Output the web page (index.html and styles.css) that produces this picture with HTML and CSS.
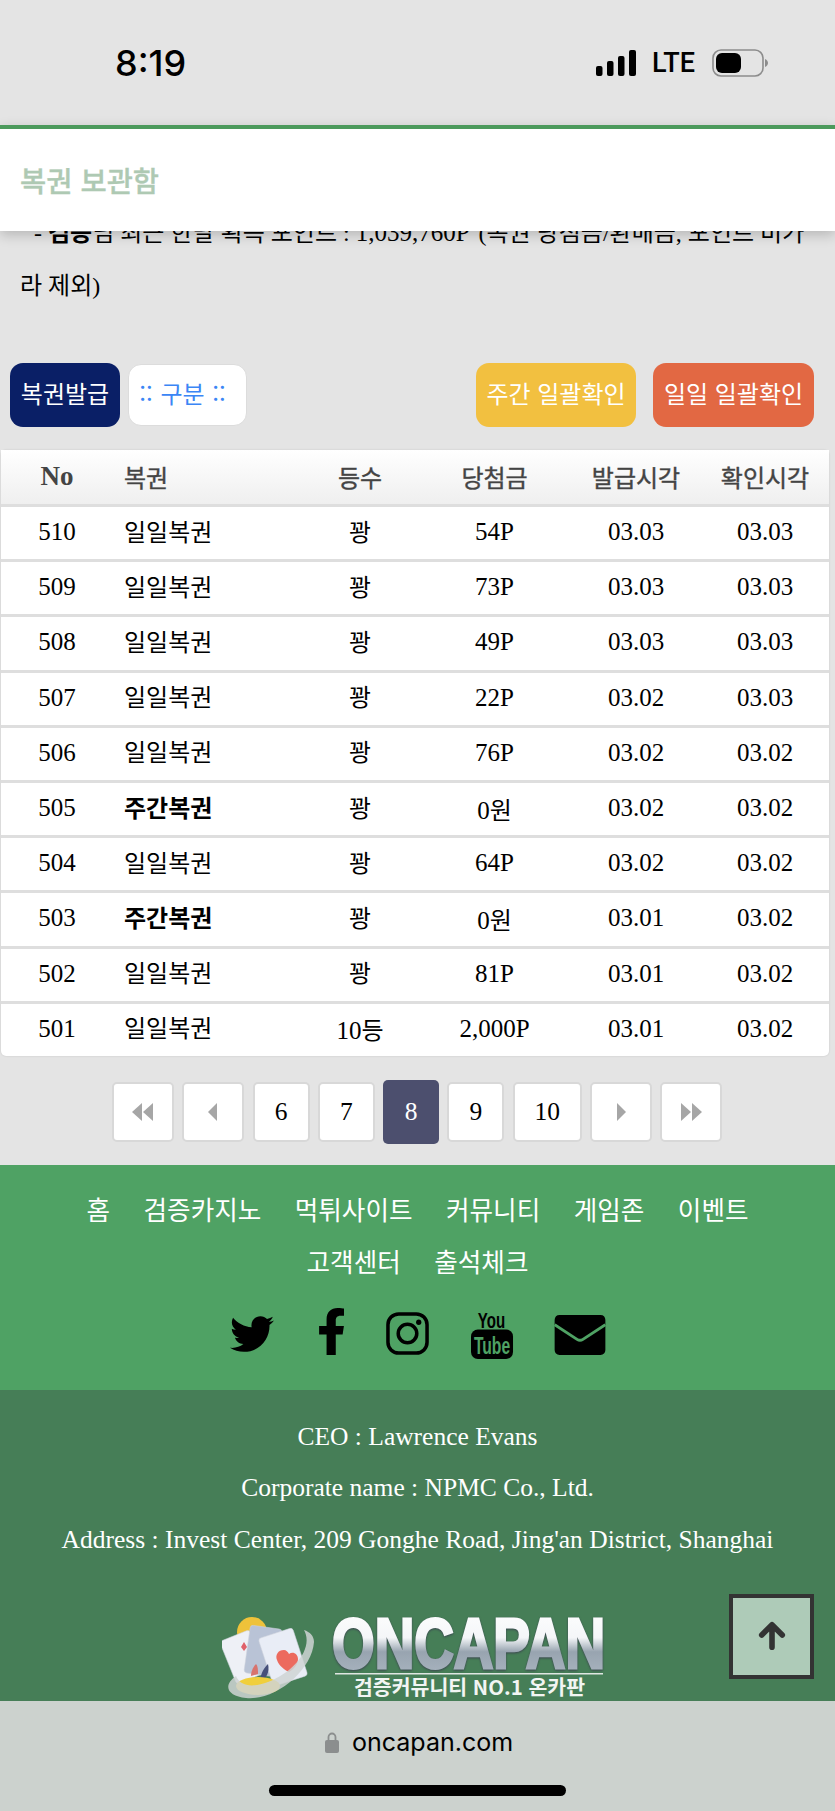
FILE: index.html
```html
<!DOCTYPE html>
<html lang="ko">
<head>
    <meta charset="UTF-8">
    <meta name="viewport" content="width=device-width, initial-scale=1.0">
    <title>복권 보관함</title>
    <link rel="stylesheet" href="styles.css">
</head>
<body>
    <div class="screen">
        <div class="status-bar">
            <span class="clock">8:19</span>
            <div class="status-right">
                <svg class="signal" viewBox="0 0 41 26" width="41" height="26">
                    <rect x="0" y="16" width="6.500" height="10" rx="2"/>
                    <rect x="11" y="11" width="6.500" height="15" rx="2"/>
                    <rect x="22" y="6" width="6.500" height="20" rx="2"/>
                    <rect x="33" y="0" width="7" height="26" rx="2"/>
                </svg>
                <span class="lte">LTE</span>
                <svg class="battery" viewBox="0 0 56 28" width="56" height="28">
                    <rect x="1" y="1" width="50" height="26" rx="8" fill="none" stroke="#8c8c8c" stroke-width="1.6"/>
                    <rect x="4" y="4" width="25" height="20" rx="6" fill="#000"/>
                    <path d="M53 10c2 1 3 2.500 3 4s-1 3-3 4z" fill="#8c8c8c"/>
                </svg>
            </div>
        </div>

        <div class="page-title">복권 보관함</div>

        <p class="notice"><span class="notice-first">- <b>검증</b>님 최근 한달 획득 포인트 : <span class="latin">1,039,760P</span> (복권 당첨금/환매금, 포인트 비가</span><br>라 제외)</p>

        <div class="toolbar">
            <a class="btn btn-navy">복권발급</a>
            <a class="btn btn-filter">:: 구분 ::</a>
            <a class="btn btn-yellow">주간 일괄확인</a>
            <a class="btn btn-orange">일일 일괄확인</a>
        </div>

        <table class="ticket-table">
            <colgroup>
                <col class="col-no"><col class="col-name"><col class="col-rank"><col class="col-prize"><col class="col-time"><col class="col-time2">
            </colgroup>
            <thead>
                <tr><th class="num">No</th><th class="left">복권</th><th>등수</th><th>당첨금</th><th>발급시각</th><th>확인시각</th></tr>
            </thead>
            <tbody>
                <tr><td>510</td><td class="left">일일복권</td><td class="ko">꽝</td><td>54P</td><td>03.03</td><td>03.03</td></tr>
                <tr><td>509</td><td class="left">일일복권</td><td class="ko">꽝</td><td>73P</td><td>03.03</td><td>03.03</td></tr>
                <tr><td>508</td><td class="left">일일복권</td><td class="ko">꽝</td><td>49P</td><td>03.03</td><td>03.03</td></tr>
                <tr><td>507</td><td class="left">일일복권</td><td class="ko">꽝</td><td>22P</td><td>03.02</td><td>03.03</td></tr>
                <tr><td>506</td><td class="left">일일복권</td><td class="ko">꽝</td><td>76P</td><td>03.02</td><td>03.02</td></tr>
                <tr><td>505</td><td class="left"><b>주간복권</b></td><td class="ko">꽝</td><td>0<span class="ko">원</span></td><td>03.02</td><td>03.02</td></tr>
                <tr><td>504</td><td class="left">일일복권</td><td class="ko">꽝</td><td>64P</td><td>03.02</td><td>03.02</td></tr>
                <tr><td>503</td><td class="left"><b>주간복권</b></td><td class="ko">꽝</td><td>0<span class="ko">원</span></td><td>03.01</td><td>03.02</td></tr>
                <tr><td>502</td><td class="left">일일복권</td><td class="ko">꽝</td><td>81P</td><td>03.01</td><td>03.02</td></tr>
                <tr class="row-last"><td>501</td><td class="left">일일복권</td><td>10<span class="ko">등</span></td><td>2,000P</td><td>03.01</td><td>03.02</td></tr>
            </tbody>
        </table>

        <div class="pager">
            <a class="page page-arrow"><svg viewBox="0 0 24 18" width="24" height="18"><polygon points="11,0 11,18 1,9"/><polygon points="22,0 22,18 12,9"/></svg></a>
            <a class="page page-arrow"><svg viewBox="0 0 12 18" width="12" height="18"><polygon points="10,0 10,18 1,9"/></svg></a>
            <a class="page page-six">6</a>
            <a class="page page-six">7</a>
            <a class="page page-on">8</a>
            <a class="page page-six">9</a>
            <a class="page page-ten">10</a>
            <a class="page page-arrow"><svg viewBox="0 0 12 18" width="12" height="18"><polygon points="2,0 2,18 11,9"/></svg></a>
            <a class="page page-arrow"><svg viewBox="0 0 24 18" width="24" height="18"><polygon points="2,0 2,18 12,9"/><polygon points="13,0 13,18 23,9"/></svg></a>
        </div>

        <div class="footer-nav">
            <div class="nav-links">
                <a>홈</a><a>검증카지노</a><a>먹튀사이트</a><a>커뮤니티</a><a>게임존</a><a>이벤트</a><a>고객센터</a><a>출석체크</a>
            </div>
            <div class="socials">
                <svg class="ico-twitter" viewBox="0 0 512 512" width="44" height="44"><path d="M459.37 151.716c.325 4.548.325 9.097.325 13.645 0 138.72-105.583 298.558-298.558 298.558-59.452 0-114.68-17.219-161.137-47.106 8.447.974 16.568 1.299 25.34 1.299 49.055 0 94.213-16.568 130.274-44.832-46.132-.975-84.792-31.188-98.112-72.772 6.498.974 12.995 1.624 19.818 1.624 9.421 0 18.843-1.3 27.614-3.573-48.081-9.747-84.143-51.98-84.143-102.985v-1.299c13.969 7.797 30.214 12.67 47.431 13.319-28.264-18.843-46.781-51.005-46.781-87.391 0-19.492 5.197-37.36 14.294-52.954 51.655 63.675 129.3 105.258 216.365 109.807-1.624-7.797-2.599-15.918-2.599-24.04 0-57.828 46.782-104.934 104.934-104.934 30.213 0 57.502 12.67 76.67 33.137 23.715-4.548 46.456-13.32 66.599-25.34-7.798 24.366-24.366 44.833-46.132 57.827 21.117-2.273 41.584-8.122 60.426-16.243-14.292 20.791-32.161 39.308-52.628 54.253z"/></svg>
                <svg class="ico-fb" viewBox="22 0 272 512" width="25" height="47"><path d="M279.14 288l14.22-92.66h-88.91v-60.13c0-25.35 12.42-50.06 52.24-50.06h40.42V6.26S260.43 0 225.36 0c-73.22 0-121.08 44.38-121.08 124.72v70.62H22.89V288h81.39v224h100.17V288z"/></svg>
                <svg class="ico-insta" viewBox="0 0 44 44" width="43" height="43">
                    <rect x="2" y="2" width="40" height="40" rx="11" fill="none" stroke="#000" stroke-width="3.600"/>
                    <circle cx="22" cy="22" r="9.500" fill="none" stroke="#000" stroke-width="3.600"/>
                    <circle cx="33.500" cy="10.500" r="2.700"/>
                </svg>
                <svg class="ico-yt" viewBox="0 0 44 52" width="43" height="51">
                    <text x="7" y="20" class="yt-you" textLength="28" lengthAdjust="spacingAndGlyphs">You</text>
                    <rect x="0" y="22" width="43" height="30" rx="7"/>
                    <text x="3" y="47" class="yt-tube" textLength="37" lengthAdjust="spacingAndGlyphs">Tube</text>
                </svg>
                <svg class="ico-mail" viewBox="0 0 52 41" width="52" height="40">
                    <path d="M5 0h42c3 0 5 2 5 5v31c0 3-2 5-5 5H5c-3 0-5-2-5-5V5c0-3 2-5 5-5z"/>
                    <path d="M0 10l23 15c2 1.300 4 1.300 6 0l23-15" fill="none" stroke="#4fa264" stroke-width="3"/>
                </svg>
            </div>
        </div>

        <div class="footer-info">
            <p>CEO : Lawrence Evans</p>
            <p>Corporate name : NPMC Co., Ltd.</p>
            <p>Address : Invest Center, 209 Gonghe Road, Jing'an District, Shanghai</p>
            <svg class="logo" viewBox="0 0 386 86" width="386" height="86">
                <defs>
                    <linearGradient id="chrome" x1="0" y1="0" x2="0" y2="1">
                        <stop offset="0" stop-color="#ffffff"/>
                        <stop offset="0.42" stop-color="#f4f6f8"/>
                        <stop offset="0.6" stop-color="#98a4b0"/>
                        <stop offset="1" stop-color="#aeb9c4"/>
                    </linearGradient>
                </defs>
                <circle cx="30" cy="18" r="15" fill="#eec23a"/>
                <g stroke="#cfd4dc" stroke-width="0.500">
                    <rect x="5" y="20" width="32" height="46" rx="3" fill="#eef0f6" transform="rotate(-22 21 43)"/>
                    <rect x="25" y="13" width="32" height="48" rx="3" fill="#b9c3d6" transform="rotate(8 41 37)"/>
                    <rect x="43" y="18" width="36" height="50" rx="3" fill="#e9edf6" transform="rotate(-18 61 43)"/>
                </g>
                <path d="M22 28l3 5-3 4-3-4z" fill="#e0606a"/>
                <path d="M34 50c-4 4-5 9-5 12l7-2c0-4 0-8-2-10z" fill="#d8736e"/>
                <path d="M46 50c-6 6-8 12-7 17 5-2 9-9 7-17z" fill="#46507a"/>
                <path d="M62 36c-6 0-9 5-7 10 2 6 8 10 12 12 5-3 9-8 9-13 0-5-5-8-9-5-1-2-3-4-5-4z" fill="#ec6a5e"/>
                <ellipse cx="36" cy="72" rx="22" ry="9" fill="#f0cf3c"/>
                <path d="M14 62C0 72 6 82 24 84c30 3 66-28 68-56 0-6-4-10-10-12 10 18-10 42-36 52-16 6-28 4-32-6z" fill="#cfd3d3" opacity="0.850"/>
                <text x="110" y="54" class="logo-name" fill="url(#chrome)" stroke="url(#chrome)" textLength="273" lengthAdjust="spacingAndGlyphs">ONCAPAN</text>
                <rect x="113" y="59" width="268" height="1.500" fill="#dfe6e2"/>
                <text x="132" y="81" class="logo-sub" textLength="231" lengthAdjust="spacingAndGlyphs">검증커뮤니티 NO.1 온카판</text>
            </svg>
            <a class="to-top">
                <svg viewBox="0 0 30 32" width="28" height="30"><path d="M15 28V5M4 15L15 4l11 11" fill="none" stroke="#333" stroke-width="6" stroke-linecap="round" stroke-linejoin="round"/></svg>
            </a>
        </div>

        <div class="browser-bar">
            <div class="address">
                <svg viewBox="0 0 14 22" width="14" height="22"><path d="M3.500 10V6a3.500 3.500 0 0 1 7 0v4" fill="none" stroke="#8b8e8e" stroke-width="1.800"/><rect x="0" y="9" width="14" height="13" rx="2" fill="#8b8e8e"/></svg>
                <span>oncapan.com</span>
            </div>
            <div class="home-bar"></div>
        </div>
    </div>
</body>
</html>
```

FILE: styles.css
```css
html, body {
    margin: 0;
    padding: 0;
}
body {
    font-family: "Liberation Serif", "Noto Sans CJK KR", serif;
    background-color: #e4e4e4;
    color: #000;
}
.screen {
    width: 835px;
    height: 1811px;
    overflow: hidden;
    display: flex;
    flex-direction: column;
}

/* phone status bar */
.status-bar {
    height: 125px;
    flex: none;
    box-sizing: border-box;
    padding: 0 67px 0 115px;
    display: flex;
    justify-content: space-between;
    align-items: center;
    font-family: "Inter", "Liberation Sans", sans-serif;
}
.clock {
    font-size: 36px;
    font-weight: 500;
}
.status-right {
    display: flex;
    align-items: center;
    gap: 15px;
}
.lte {
    margin-right: 2px;
    font-size: 27px;
    font-weight: 500;
    font-family: "Roboto", sans-serif;
}

/* title */
.page-title {
    position: relative;
    z-index: 2;
    flex: none;
    height: 102px;
    line-height: 102px;
    padding-left: 20px;
    background: #fff;
    border-top: 4px solid #4c9a5c;
    box-shadow: 0 4px 12px rgba(0, 0, 0, 0.2);
    color: #aec9b3;
    font-family: "Noto Sans CJK KR", sans-serif;
    font-size: 28.500px;
    font-weight: 500;
    -webkit-text-stroke: 0.3px #aec9b3;
}
.notice {
    flex: none;
    margin: -25px 0 0;
    padding-left: 20px;
    font-size: 24px;
    line-height: 53px;
    white-space: nowrap;
}
.notice-first {
    padding-left: 14px;
}
.latin {
    font-size: 25px;
    margin-right: 3px;
}

/* buttons */
.toolbar {
    flex: none;
    margin-top: 50px;
    padding: 0 21px 0 10px;
    height: 64px;
    display: flex;
    align-items: center;
    font-family: "Noto Sans CJK KR", sans-serif;
}
.btn {
    height: 64px;
    line-height: 60px;
    box-sizing: border-box;
    text-align: center;
    font-size: 24px;
    color: #fff;
    border-radius: 13px;
}
.btn-navy {
    width: 110px;
    background: #0a1f66;
}
.btn-filter {
    width: 119px;
    height: 62px;
    line-height: 56px;
    margin-left: 8px;
    padding-right: 10px;
    background: #fff;
    color: #3b86f5;
    border: 1px solid #dcdcdc;
    margin-right: auto;
    word-spacing: 1px;
}
.btn-yellow {
    width: 160px;
    background: #f2c040;
}
.btn-orange {
    width: 161px;
    margin-left: 17px;
    background: #e26843;
}

/* table */
.ticket-table {
    flex: none;
    width: 828px;
    margin: 23px 0 0 1px;
    table-layout: fixed;
    border-collapse: separate;
    border-spacing: 0;
    background: #fff;
    border-radius: 5px;
    font-size: 25px;
    box-shadow: 0 0 2px rgba(0, 0, 0, 0.15);
}
.col-no { width: 112px; }
.col-name { width: 189px; }
.col-rank { width: 116px; }
.col-prize { width: 153px; }
.col-time { width: 130px; }
.ticket-table th {
    height: 52px;
    padding: 0 0 2px;
    font-size: 24px;
    font-weight: 400;
    color: #444;
    background: linear-gradient(#ffffff, #efefef);
    border-bottom: 3px solid #dedede;
    -webkit-text-stroke: 0.4px #444;
}
.ticket-table th.num {
    font-size: 27px;
    font-weight: 700;
    -webkit-text-stroke: 0;
}
.ticket-table td {
    height: 50.200px;
    padding: 0 0 2px;
    text-align: center;
    border-bottom: 3px solid #dedede;
}
.ticket-table .left {
    text-align: left;
    padding-left: 11px;
    font-size: 24px;
}
.ticket-table .ko {
    font-size: 24px;
}
.ticket-table td.left,
.ticket-table td.ko {
    padding-bottom: 6px;
    height: 46.200px;
}
.ticket-table .row-last td {
    border-bottom: 0;
}

/* pagination */
.pager {
    flex: none;
    margin-top: 26px;
    height: 60px;
    padding-left: 112px;
    display: flex;
    align-items: center;
    gap: 8.300px;
    font-size: 25.500px;
}
.page {
    height: 60px;
    box-sizing: border-box;
    display: flex;
    align-items: center;
    justify-content: center;
    background: #fff;
    border: 2px solid #d8d8d8;
    border-radius: 5px;
}
.page svg {
    fill: #a6a6a6;
}
.page-arrow { width: 62px; }
.page-six { width: 57px; }
.page-ten { width: 69px; }
.page-on {
    width: 56px;
    height: 64px;
    border: 0;
    color: #fff;
    background: #4c4f6e;
}

/* footer */
.footer-nav {
    flex: none;
    margin-top: 23px;
    height: 225px;
    box-sizing: border-box;
    padding-top: 18px;
    background: #4fa264;
    font-family: "Noto Sans CJK KR", sans-serif;
}
.nav-links {
    width: 720px;
    margin: 0 auto;
    display: flex;
    flex-wrap: wrap;
    justify-content: center;
    column-gap: 33.500px;
    font-size: 25.600px;
    line-height: 52px;
    color: #fff;
}
.socials {
    margin-top: 21px;
    height: 52px;
    padding-left: 230px;
    display: flex;
    align-items: center;
    gap: 42px;
}
.ico-twitter { margin-right: 3px; }
.ico-fb { margin-top: -4px; }
.ico-mail { margin: 2px 0 0 -2px; }
.yt-you {
    font-family: "Liberation Sans", sans-serif;
    font-weight: 700;
    font-size: 22px;
}
.yt-tube {
    font-family: "Liberation Sans", sans-serif;
    font-weight: 700;
    font-size: 24px;
    fill: #4fa264;
}
.footer-info {
    position: relative;
    flex: none;
    height: 311px;
    box-sizing: border-box;
    padding-top: 21px;
    overflow: hidden;
    background: #467e57;
    color: #fff;
    text-align: center;
    font-size: 25.500px;
    line-height: 51.500px;
}
.footer-info p {
    margin: 0;
}
.logo {
    display: block;
    margin: 49px 0 0 222px;
}
.logo-name {
    font-family: "Liberation Sans", sans-serif;
    font-weight: 700;
    font-size: 70px;
    stroke-width: 3px;
    filter: drop-shadow(0 1px 1px #3c4650);
}
.logo-sub {
    font-family: "Noto Sans CJK KR", sans-serif;
    font-weight: 700;
    font-size: 20px;
    fill: #f2f5f3;
}
.to-top {
    position: absolute;
    left: 729px;
    top: 204px;
    width: 85px;
    height: 85px;
    box-sizing: border-box;
    display: flex;
    align-items: center;
    justify-content: center;
    background: #aecbb8;
    border: 4px solid #333;
}

/* browser bottom bar */
.browser-bar {
    flex: 1;
    position: relative;
    z-index: 2;
    background: #ccd2ce;
    font-family: "Inter", "Liberation Sans", sans-serif;
}
.address {
    height: 82px;
    box-sizing: border-box;
    padding: 0 0 0 325px;
    display: flex;
    align-items: center;
    gap: 13px;
    font-size: 25px;
}
.home-bar {
    width: 297px;
    height: 11px;
    margin: 2px 0 0 269px;
    background: #000;
    border-radius: 6px;
}
```
